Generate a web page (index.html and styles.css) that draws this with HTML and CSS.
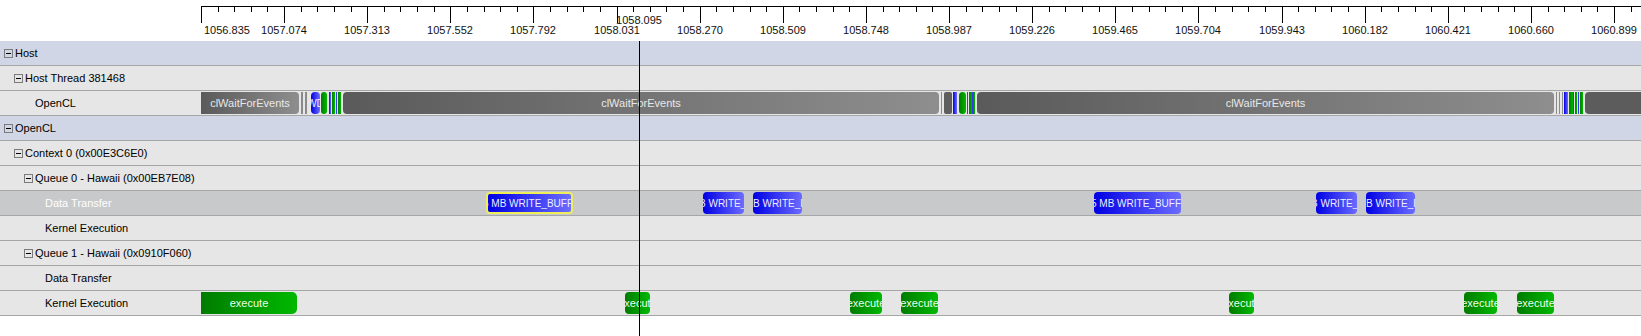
FILE: index.html
```html
<!DOCTYPE html>
<html lang="en">
<head>
  <meta charset="UTF-8">
  <title>OpenCL Timeline</title>
  <link rel="stylesheet" href="styles.css">
</head>
<body>
  <div class="timeline">
    <div class="ruler" id="ruler">
      <span class="cursor-label">1058.095</span>
    </div>

    <div class="track group">
      <span class="label lvl0"><i class="toggle"></i>Host</span>
    </div>
    <div class="track">
      <span class="label lvl1"><i class="toggle"></i>Host Thread 381468</span>
    </div>
    <div class="track">
      <span class="label leaf2">OpenCL</span>
      <div class="lane" id="hostApi"></div>
    </div>
    <div class="track group">
      <span class="label lvl0"><i class="toggle"></i>OpenCL</span>
    </div>
    <div class="track">
      <span class="label lvl1"><i class="toggle"></i>Context 0 (0x00E3C6E0)</span>
    </div>
    <div class="track">
      <span class="label lvl2"><i class="toggle"></i>Queue 0 - Hawaii (0x00EB7E08)</span>
    </div>
    <div class="track selected">
      <span class="label leaf3">Data Transfer</span>
      <div class="lane" id="q0Transfer"></div>
    </div>
    <div class="track">
      <span class="label leaf3">Kernel Execution</span>
    </div>
    <div class="track">
      <span class="label lvl2"><i class="toggle"></i>Queue 1 - Hawaii (0x0910F060)</span>
    </div>
    <div class="track">
      <span class="label leaf3">Data Transfer</span>
    </div>
    <div class="track">
      <span class="label leaf3">Kernel Execution</span>
      <div class="lane" id="q1Kernel"></div>
    </div>

    <div class="cursor"></div>
  </div>

  <script>
    const LANE_X = 201;
    const MAJOR = 83.12;
    const stamps = ["1056.835", "1057.074", "1057.313", "1057.552", "1057.792", "1058.031",
      "1058.270", "1058.509", "1058.748", "1058.987", "1059.226", "1059.465", "1059.704",
      "1059.943", "1060.182", "1060.421", "1060.660", "1060.899"];

    const ruler = document.getElementById("ruler");
    for (let i = 0; ; i++) {
      const x = Math.round(LANE_X + i * MAJOR / 5);
      if (x > 1640) break;
      const tick = document.createElement("div");
      tick.className = i % 5 === 0 ? "tick major" : "tick";
      tick.style.left = x + "px";
      ruler.appendChild(tick);
    }
    stamps.forEach((v, i) => {
      const s = document.createElement("span");
      s.className = i === 0 ? "stamp first" : "stamp";
      s.textContent = v;
      s.style.left = Math.round(LANE_X + i * MAJOR) + "px";
      ruler.appendChild(s);
    });

    // [class, x, width, text, text shift]
    const hostApi = [
      ["api first", 201, 98, "clWaitForEvents"],
      ["stub", 301, 2], ["stub", 305, 2],
      ["blue", 311, 9, "WD"],
      ["green", 321, 6], ["blue", 329, 2], ["green", 332, 3], ["blue", 336, 1], ["green", 338, 3],
      ["api", 343, 596, "clWaitForEvents"],
      ["stub", 941, 1], ["stub dark", 944, 8],
      ["blue", 953, 4], ["green", 959, 7], ["blue", 967, 1], ["green", 969, 3], ["blue", 972, 1], ["green", 973, 2],
      ["api", 977, 577, "clWaitForEvents"],
      ["stub", 1556, 1], ["stub", 1559, 1], ["stub", 1562, 1],
      ["blue", 1564, 4], ["green", 1569, 4], ["blue", 1573, 1], ["green", 1575, 2], ["blue", 1578, 1], ["green", 1580, 3],
      ["api last", 1585, 80]
    ];
    const q0Transfer = [
      ["blue sel", 486, 87, "5 MB WRITE_BUFFER", -5],
      ["blue", 703, 41, "B WRITE_BUFFER", -4],
      ["blue", 753, 49, "B WRITE_BUFFER", 0],
      ["blue", 1094, 87, "5 MB WRITE_BUFFER", -3],
      ["blue", 1316, 41, "B WRITE_BUFFER", -5],
      ["blue", 1366, 49, "B WRITE_BUFFER", 0]
    ];
    const q1Kernel = [
      ["green first", 201, 96, "execute"],
      ["green", 625, 25, "execute"],
      ["green", 850, 32, "execute"],
      ["green", 901, 37, "execute"],
      ["green", 1229, 25, "execute"],
      ["green", 1464, 33, "execute"],
      ["green", 1517, 37, "execute"]
    ];

    function render(id, items) {
      const lane = document.getElementById(id);
      items.forEach(([cls, x, w, text, shift]) => {
        const bar = document.createElement("div");
        bar.className = "bar " + cls + (w < 6 ? " thin" : "");
        bar.style.left = (x - LANE_X) + "px";
        bar.style.width = w + "px";
        if (text) {
          const s = document.createElement("span");
          s.textContent = text;
          if (shift !== undefined) {
            bar.classList.add("from-left");
            s.style.marginLeft = shift + "px";
          }
          bar.appendChild(s);
        }
        lane.appendChild(bar);
      });
    }

    render("hostApi", hostApi);
    render("q0Transfer", q0Transfer);
    render("q1Kernel", q1Kernel);
  </script>
</body>
</html>
```

FILE: styles.css
```css
body {
  margin: 0;
  background: #fff;
  font-family: "Liberation Sans", Arial, sans-serif;
  font-size: 11px;
  color: #000;
  overflow: hidden;
}
.timeline {
  position: relative;
  height: 336px;
}

/* ruler */
.ruler {
  position: relative;
  height: 41px;
}
.ruler::before {
  content: "";
  position: absolute;
  left: 201px;
  right: 0;
  top: 6px;
  height: 1px;
  background: #000;
}
.tick {
  position: absolute;
  top: 6px;
  width: 1px;
  height: 6px;
  background: #000;
}
.tick.major {
  height: 17px;
}
.stamp {
  position: absolute;
  top: 24px;
  line-height: 13px;
  color: #111;
  transform: translateX(-50%);
  white-space: nowrap;
}
.stamp.first {
  transform: none;
  margin-left: 3px;
}
.cursor-label {
  position: absolute;
  left: 639px;
  top: 14px;
  line-height: 13px;
  color: #111;
  transform: translateX(-50%);
}

/* tracks */
.track {
  display: flex;
  height: 24px;
  background: #e6e6e6;
  border-bottom: 1px solid #a6a6a6;
}
.track.group {
  background: #d0d6e5;
}
.track.selected {
  background: #c8c9ca;
  color: #fff;
}
.label {
  flex: none;
  width: 201px;
  box-sizing: border-box;
  display: flex;
  align-items: center;
  white-space: nowrap;
}
.lvl0 { padding-left: 4px; }
.lvl1 { padding-left: 14px; }
.lvl2 { padding-left: 24px; }
.leaf2 { padding-left: 35px; }
.leaf3 { padding-left: 45px; }

.toggle {
  position: relative;
  flex: none;
  width: 9px;
  height: 9px;
  box-sizing: border-box;
  border: 1px solid #7b7b7b;
  margin-right: 2px;
}
.toggle::after {
  content: "";
  position: absolute;
  left: 1px;
  top: 3px;
  width: 5px;
  height: 1px;
  background: #000;
}

.lane {
  position: relative;
  flex: 1;
  overflow: hidden;
}

/* bars */
.bar {
  position: absolute;
  top: 1px;
  height: 22px;
  box-sizing: border-box;
  display: flex;
  align-items: center;
  justify-content: center;
  overflow: hidden;
  white-space: nowrap;
  border-radius: 4px;
  color: #fff;
}
.bar span {
  flex: none;
}
.bar.from-left {
  justify-content: flex-start;
}
.bar.thin {
  border-radius: 0;
}
.api {
  background: linear-gradient(to right, #5a5a5a, #8e8e8e);
  color: #e8e8e8;
}
.api.first {
  border-radius: 0 4px 4px 0;
}
.api.last {
  background: #5c5c5c;
}
.stub {
  background: #8a8a8a;
}
.stub.dark {
  background: #5e5e5e;
  border-radius: 2px;
}
.blue {
  background: linear-gradient(to right, #0000e4, #6c6cff);
  color: #eeeeff;
  font-size: 10px;
}
.blue.sel {
  border: 2px solid #eeee5a;
}
.green {
  background: linear-gradient(to right, #007c00, #00b800);
  color: #eaffea;
}
.green.first {
  border-radius: 0 5px 5px 0;
}

.cursor {
  position: absolute;
  left: 639px;
  top: 41px;
  bottom: 0;
  width: 1px;
  background: #000;
}
```
